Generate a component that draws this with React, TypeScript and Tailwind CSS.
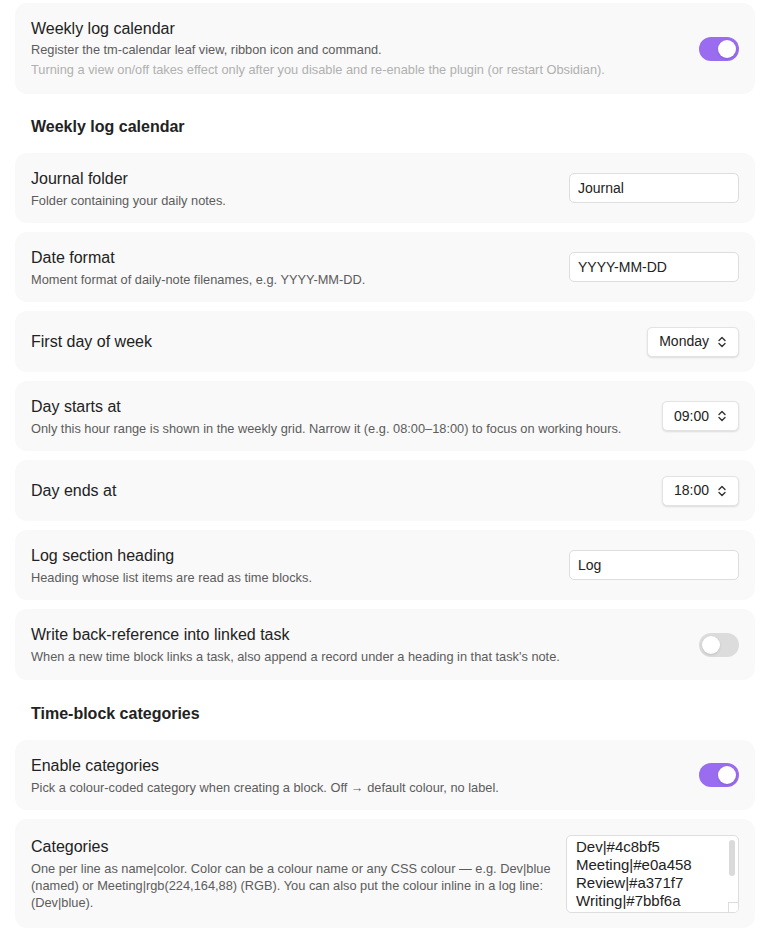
import React from "react";

const Toggle = ({ on }: { on: boolean }) => (
  <div className={`w-[40px] h-[24px] rounded-full flex items-center px-[3px] shrink-0 ${on ? "bg-[#9a6cf0] justify-end" : "bg-[#dcdcdc] justify-start"}`}>
    <div className="w-[18px] h-[18px] rounded-full bg-white shadow-sm" />
  </div>
);

const Chevron = () => (
  <svg width="10" height="12" viewBox="0 0 10 12" className="ml-2"><path d="M2 4.5L5 1.5L8 4.5M2 7.5L5 10.5L8 7.5" fill="none" stroke="#333" strokeWidth="1.4" strokeLinecap="round" strokeLinejoin="round"/></svg>
);

const Select = ({ v }: { v: string }) => (
  <div className="h-[30px] px-[11px] flex items-center bg-white rounded-[5px] border border-[#e3e3e3] shadow-[0_1px_2px_rgba(0,0,0,0.12)] text-[14px] text-[#222] shrink-0">
    {v}<Chevron />
  </div>
);

const Input = ({ v }: { v: string }) => (
  <div className="w-[170px] h-[30px] px-[8px] flex items-center bg-white rounded-[5px] border border-[#dedede] text-[14px] text-[#222] shrink-0">{v}</div>
);

const Row = ({ title, desc, control, h }: { title: string; desc?: React.ReactNode; control: React.ReactNode; h: string }) => (
  <div className={`bg-[#f9f9f9] rounded-[12px] px-[16px] flex items-center justify-between gap-4 ${h}`}>
    <div className="flex flex-col">
      <div className="text-[16px] text-[#222] leading-[22px]">{title}</div>
      {desc && <div className="text-[12.8px] text-[#5c5c5c] leading-[17px] mt-[2px]">{desc}</div>}
    </div>
    {control}
  </div>
);

export default function App() {
  return (
    <div className="w-[778px] h-[937px] bg-white pl-[15px] pr-[23px] pt-[3px] flex flex-col gap-[9px] overflow-hidden" style={{ fontFamily: '"Liberation Sans", Arial, sans-serif' }}>
      <div className="bg-[#f9f9f9] rounded-[12px] px-[16px] h-[91px] flex items-center justify-between">
        <div className="flex flex-col">
          <div className="text-[16px] text-[#222] leading-[22px]">Weekly log calendar</div>
          <div className="text-[12.8px] text-[#5c5c5c] leading-[20px]">Register the tm-calendar leaf view, ribbon icon and command.</div>
          <div className="text-[12.8px] text-[#b0b0b0] leading-[20px]">Turning a view on/off takes effect only after you disable and re-enable the plugin (or restart Obsidian).</div>
        </div>
        <Toggle on />
      </div>
      <div className="h-[41px] flex items-end pb-[6px] px-[16px] text-[16px] leading-[22px] font-bold text-[#222]">Weekly log calendar</div>
      <Row h="h-[70px]" title="Journal folder" desc="Folder containing your daily notes." control={<Input v="Journal" />} />
      <Row h="h-[70px]" title="Date format" desc="Moment format of daily-note filenames, e.g. YYYY-MM-DD." control={<Input v="YYYY-MM-DD" />} />
      <Row h="h-[61px]" title="First day of week" control={<Select v="Monday" />} />
      <Row h="h-[70px]" title="Day starts at" desc="Only this hour range is shown in the weekly grid. Narrow it (e.g. 08:00–18:00) to focus on working hours." control={<Select v="09:00" />} />
      <Row h="h-[61px]" title="Day ends at" control={<Select v="18:00" />} />
      <Row h="h-[70px]" title="Log section heading" desc="Heading whose list items are read as time blocks." control={<Input v="Log" />} />
      <Row h="h-[71px]" title="Write back-reference into linked task" desc="When a new time block links a task, also append a record under a heading in that task's note." control={<Toggle on={false} />} />
      <div className="h-[42px] flex items-end pb-[6px] px-[16px] text-[16px] leading-[22px] font-bold text-[#222]">Time-block categories</div>
      <Row h="h-[70px]" title="Enable categories" desc="Pick a colour-coded category when creating a block. Off → default colour, no label." control={<Toggle on />} />
      <div className="bg-[#f9f9f9] rounded-[12px] px-[16px] h-[109px] flex items-center justify-between gap-[14px]">
        <div className="flex flex-col">
          <div className="text-[16px] text-[#222] leading-[22px]">Categories</div>
          <div className="text-[12.8px] text-[#5c5c5c] leading-[17px] mt-[2px]">One per line as name|color. Color can be a colour name or any CSS colour — e.g. Dev|blue (named) or Meeting|rgb(224,164,88) (RGB). You can also put the colour inline in a log line: (Dev|blue).</div>
        </div>
        <div className="relative w-[173px] h-[78px] bg-white border border-[#dedede] rounded-[5px] overflow-hidden shrink-0 px-[9px] pt-[2px] text-[15px] leading-[18px] text-[#222]">
          <div>Dev|#4c8bf5</div>
          <div>Meeting|#e0a458</div>
          <div>Review|#a371f7</div>
          <div>Writing|#7bbf6a</div>
          <div>Personal|#f0b959</div>
          <div className="absolute right-[3px] top-[4px] w-[6px] h-[36px] rounded-full bg-[#dadada]" />
          <div className="absolute right-0 bottom-0 w-[10px] h-[10px] bg-white border-l border-t border-[#ddd]" />
        </div>
      </div>
    </div>
  );
}
